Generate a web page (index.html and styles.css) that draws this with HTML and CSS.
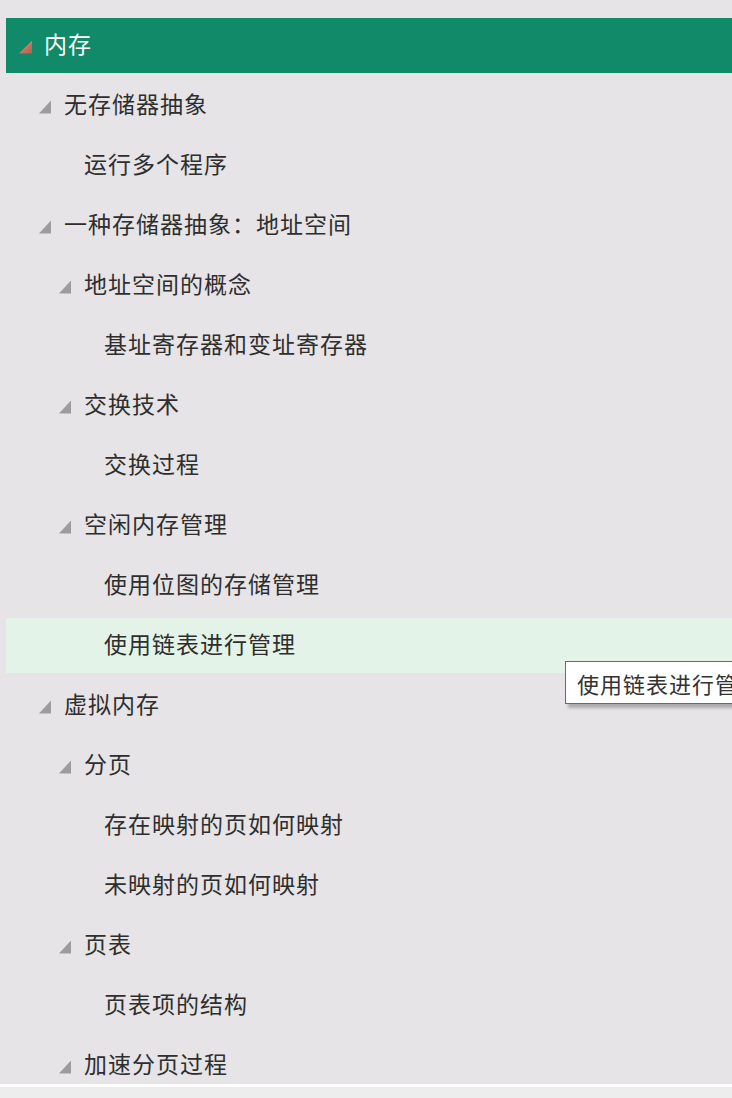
FILE: index.html
```html
<!DOCTYPE html>
<html lang="zh-CN">
<head>
<meta charset="utf-8">
<link rel="stylesheet" href="styles.css">
</head>
<body>
<div class="pane">
  <ul class="tree">
    <li class="row header"><span class="tri tri-red"></span><span class="label">内存</span></li>
    <li class="row l1"><span class="tri"></span><span class="label">无存储器抽象</span></li>
    <li class="row l1 leaf"><span class="label">运行多个程序</span></li>
    <li class="row l1"><span class="tri"></span><span class="label">一种存储器抽象：地址空间</span></li>
    <li class="row l2"><span class="tri"></span><span class="label">地址空间的概念</span></li>
    <li class="row l2 leaf"><span class="label">基址寄存器和变址寄存器</span></li>
    <li class="row l2"><span class="tri"></span><span class="label">交换技术</span></li>
    <li class="row l2 leaf"><span class="label">交换过程</span></li>
    <li class="row l2"><span class="tri"></span><span class="label">空闲内存管理</span></li>
    <li class="row l2 leaf"><span class="label">使用位图的存储管理</span></li>
    <li class="row l2 leaf hover"><span class="label">使用链表进行管理</span><div class="tooltip">使用链表进行管理</div></li>
    <li class="row l1"><span class="tri"></span><span class="label">虚拟内存</span></li>
    <li class="row l2"><span class="tri"></span><span class="label">分页</span></li>
    <li class="row l2 leaf"><span class="label">存在映射的页如何映射</span></li>
    <li class="row l2 leaf"><span class="label">未映射的页如何映射</span></li>
    <li class="row l2"><span class="tri"></span><span class="label">页表</span></li>
    <li class="row l2 leaf"><span class="label">页表项的结构</span></li>
    <li class="row l2"><span class="tri"></span><span class="label">加速分页过程</span></li>
  </ul>
</div>
<div class="divider"></div>
<div class="footer"></div>
</body>
</html>
```
FILE: styles.css
```css
html, body {
  margin: 0;
  padding: 0;
  background: #e6e4e6;
  width: 732px;
  height: 1098px;
  overflow: hidden;
}
body {
  font-family: "Noto Sans CJK SC", "Noto Sans", sans-serif;
  color: #2e2e2e;
}
.pane {
  height: 1084px;
  overflow: hidden;
  padding-left: 6px;
  box-sizing: border-box;
}
.tree {
  list-style: none;
  margin: 0;
  padding: 18px 0 0 0;
  display: flex;
  flex-direction: column;
  gap: 5px;
}
.row {
  position: relative;
  height: 55px;
  box-sizing: border-box;
  padding-bottom: 5px;
  display: flex;
  align-items: center;
  font-size: 23px;
  letter-spacing: 1px;
  line-height: 1;
}
.row.header {
  background: #108a69;
  color: #ffffff;
  padding-left: 13px;
}
.row.l1 { padding-left: 33px; }
.row.l1.leaf { padding-left: 78px; }
.row.l2 { padding-left: 53px; }
.row.l2.leaf { padding-left: 98px; }
.row.hover { background: #e3f3e8; }
.tri {
  width: 12px;
  height: 13px;
  margin-right: 13px;
  margin-top: 8px;
  background: #9d9b9e;
  clip-path: polygon(100% 0, 100% 100%, 0 100%);
}
.tri-red {
  width: 13px;
  height: 13px;
  background: linear-gradient(135deg, #e2b3a6 0%, #c4705e 60%, #b65a49 100%);
  margin-right: 12px;
}
.tooltip {
  position: absolute;
  left: 559px;
  top: 43px;
  height: 43px;
  width: 200px;
  box-sizing: border-box;
  background: #ffffff;
  border: 1px solid #6a6a6a;
  padding: 0 0 0 11px;
  display: flex;
  align-items: center;
  font-size: 22px;
  letter-spacing: 1px;
  color: #333;
  white-space: nowrap;
  overflow: hidden;
  box-shadow: 3px 4px 3px rgba(0,0,0,0.25);
  z-index: 2;
}
.divider {
  height: 3px;
  background: #ffffff;
}
.footer {
  height: 11px;
  background: #ededed;
}
```
